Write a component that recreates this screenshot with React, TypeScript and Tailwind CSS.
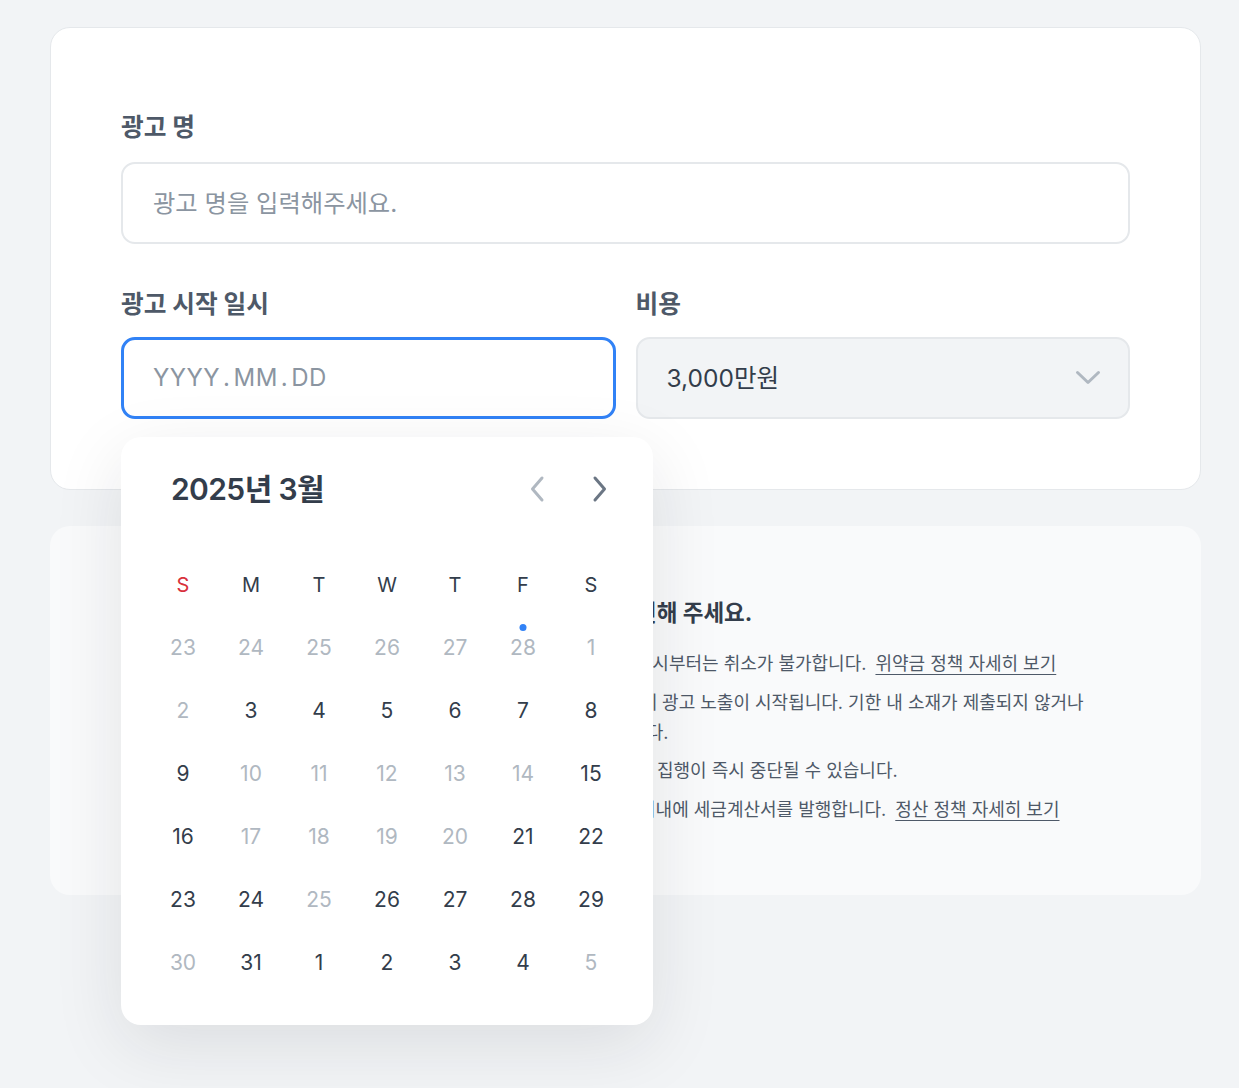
import React from "react";

type Day = { n: number; muted?: boolean; dot?: boolean };

const rows: Day[][] = [
  [
    { n: 23, muted: true },
    { n: 24, muted: true },
    { n: 25, muted: true },
    { n: 26, muted: true },
    { n: 27, muted: true },
    { n: 28, muted: true, dot: true },
    { n: 1, muted: true },
  ],
  [
    { n: 2, muted: true },
    { n: 3 },
    { n: 4 },
    { n: 5 },
    { n: 6 },
    { n: 7 },
    { n: 8 },
  ],
  [
    { n: 9 },
    { n: 10, muted: true },
    { n: 11, muted: true },
    { n: 12, muted: true },
    { n: 13, muted: true },
    { n: 14, muted: true },
    { n: 15 },
  ],
  [
    { n: 16 },
    { n: 17, muted: true },
    { n: 18, muted: true },
    { n: 19, muted: true },
    { n: 20, muted: true },
    { n: 21 },
    { n: 22 },
  ],
  [
    { n: 23 },
    { n: 24 },
    { n: 25, muted: true },
    { n: 26 },
    { n: 27 },
    { n: 28 },
    { n: 29 },
  ],
  [
    { n: 30, muted: true },
    { n: 31 },
    { n: 1 },
    { n: 2 },
    { n: 3 },
    { n: 4 },
    { n: 5, muted: true },
  ],
];

const weekdays = ["S", "M", "T", "W", "T", "F", "S"];

function Calendar() {
  return (
    <div className="absolute left-0 top-[100px] z-20 w-[532px] rounded-[20px] bg-white pt-[36px] pb-[31px] shadow-[0_20px_70px_rgba(25,31,40,0.10)]">
      <div className="flex items-center justify-between pl-[50px] pr-[45px]">
        <div className="text-[30px] font-semibold leading-[32px] tracking-[-0.02em] text-[#333d4b]">
          2025년 3월
        </div>
        <div className="flex items-center gap-[47px]">
          <svg width="16" height="28" viewBox="0 0 16 28" fill="none">
            <path
              d="M13 3 L3.5 14 L13 25"
              stroke="#b0b8c1"
              strokeWidth="3"
              strokeLinecap="round"
              strokeLinejoin="round"
            />
          </svg>
          <svg width="16" height="28" viewBox="0 0 16 28" fill="none">
            <path
              d="M3 3 L12.5 14 L3 25"
              stroke="#6b7684"
              strokeWidth="3"
              strokeLinecap="round"
              strokeLinejoin="round"
            />
          </svg>
        </div>
      </div>
      <div className="mt-[48px] grid grid-cols-7 px-[28px]">
        {weekdays.map((w, i) => (
          <div
            key={i}
            className={`flex h-[63px] items-center justify-center text-[20px] ${
              i === 0 ? "text-[#d8303b]" : "text-[#333d4b]"
            }`}
          >
            {w}
          </div>
        ))}
        {rows.flat().map((d, i) => (
          <div
            key={i}
            className={`relative flex h-[63px] items-center justify-center text-[21px] ${
              d.muted ? "text-[#b0b8c1]" : "text-[#333d4b]"
            }`}
          >
            {d.dot && (
              <span className="absolute left-1/2 top-[8px] h-[7px] w-[7px] -translate-x-1/2 rounded-full bg-[#3182f6]" />
            )}
            {d.n}
          </div>
        ))}
      </div>
    </div>
  );
}

export default function App() {
  return (
    <div className="min-h-[1088px] bg-[#f2f4f6] pl-[50px] pt-[27px] font-[Inter,'Noto_Sans_CJK_KR',sans-serif]">
      <div className="flex w-[1151px] flex-col gap-[36px]">
        <div className="relative z-10 rounded-[20px] border border-[#e5e8eb] bg-white px-[70px] pb-[70px] pt-[84px]">
          <div className="text-[24.7px] font-bold leading-[30px] text-[#4e5968]">광고 명</div>
          <div className="mt-[20px] flex h-[82px] items-center rounded-[14px] border-2 border-[#e5e8eb] bg-white pl-[30px] text-[24.3px] text-[#8b95a1]">
            광고 명을 입력해주세요.
          </div>
          <div className="mt-[45px] grid grid-cols-2 gap-[20px]">
            <div>
              <div className="text-[24.7px] font-bold leading-[30px] text-[#4e5968]">광고 시작 일시</div>
              <div className="relative mt-[18px]">
                <div className="flex h-[82px] items-center rounded-[14px] border-[3px] border-[#3182f6] bg-white pl-[29px] text-[24px] tracking-[0.02em] text-[#8b95a1]">
                  YYYY<span className="mx-[3px]">.</span>MM<span className="mx-[3px]">.</span>DD
                </div>
                <Calendar />
              </div>
            </div>
            <div>
              <div className="text-[24.7px] font-bold leading-[30px] text-[#4e5968]">비용</div>
              <div className="mt-[18px] flex h-[82px] items-center justify-between rounded-[14px] border-2 border-[#e5e8eb] bg-[#f2f4f6] pl-[29px] pr-[27px] text-[24.5px] text-[#333d4b]">
                <span>3,000만원</span>
                <svg width="26" height="16" viewBox="0 0 26 16" fill="none">
                  <path
                    d="M2.5 2.5 L13 12.5 L23.5 2.5"
                    stroke="#b0b8c1"
                    strokeWidth="3"
                    strokeLinecap="round"
                    strokeLinejoin="round"
                  />
                </svg>
              </div>
            </div>
          </div>
        </div>

        <div className="rounded-[20px] bg-[#f9fafb] px-[71px] pb-[70px] pt-[70px]">
          <div className="text-[22.5px] font-bold leading-[34px] text-[#333d4b]">
            [필독] 광고 집행 전 아래 유의사항을 반드시 꼼꼼하게 확인해 주세요.
          </div>
          <ul className="mt-[19px] flex w-[970px] flex-col gap-[8.5px] break-keep text-[18px] leading-[30px] text-[#4e5968]">
            <li>
              광고 신청 후 심사 승인이 완료된 경우, 광고 시작일 기준 10일 전 오후 3시부터는 취소가 불가합니다.{" "}
              <a className="ml-[4px] underline underline-offset-[4px]">위약금 정책 자세히 보기</a>
            </li>
            <li>
              광고 소재는 시작일 전까지 제출해야 하며, 검수 완료 후 선택하신 일시에 광고 노출이 시작됩니다. 기한 내 소재가 제출되지 않거나 검수에서 반려된 경우엔 광고 시작이 지연되거나 자동 취소될 수 있습니다.
            </li>
            <li>광고 운영 정책에 위배되는 소재 또는 부적절한 표현이 확인될 경우 광고 집행이 즉시 중단될 수 있습니다.</li>
            <li>
              광고 종료 후 집행 금액이 확정되면 광고비는 매월 말일 기준 7 영업일 이내에 세금계산서를 발행합니다.{" "}
              <a className="ml-[4px] underline underline-offset-[4px]">정산 정책 자세히 보기</a>
            </li>
          </ul>
        </div>
      </div>
    </div>
  );
}
